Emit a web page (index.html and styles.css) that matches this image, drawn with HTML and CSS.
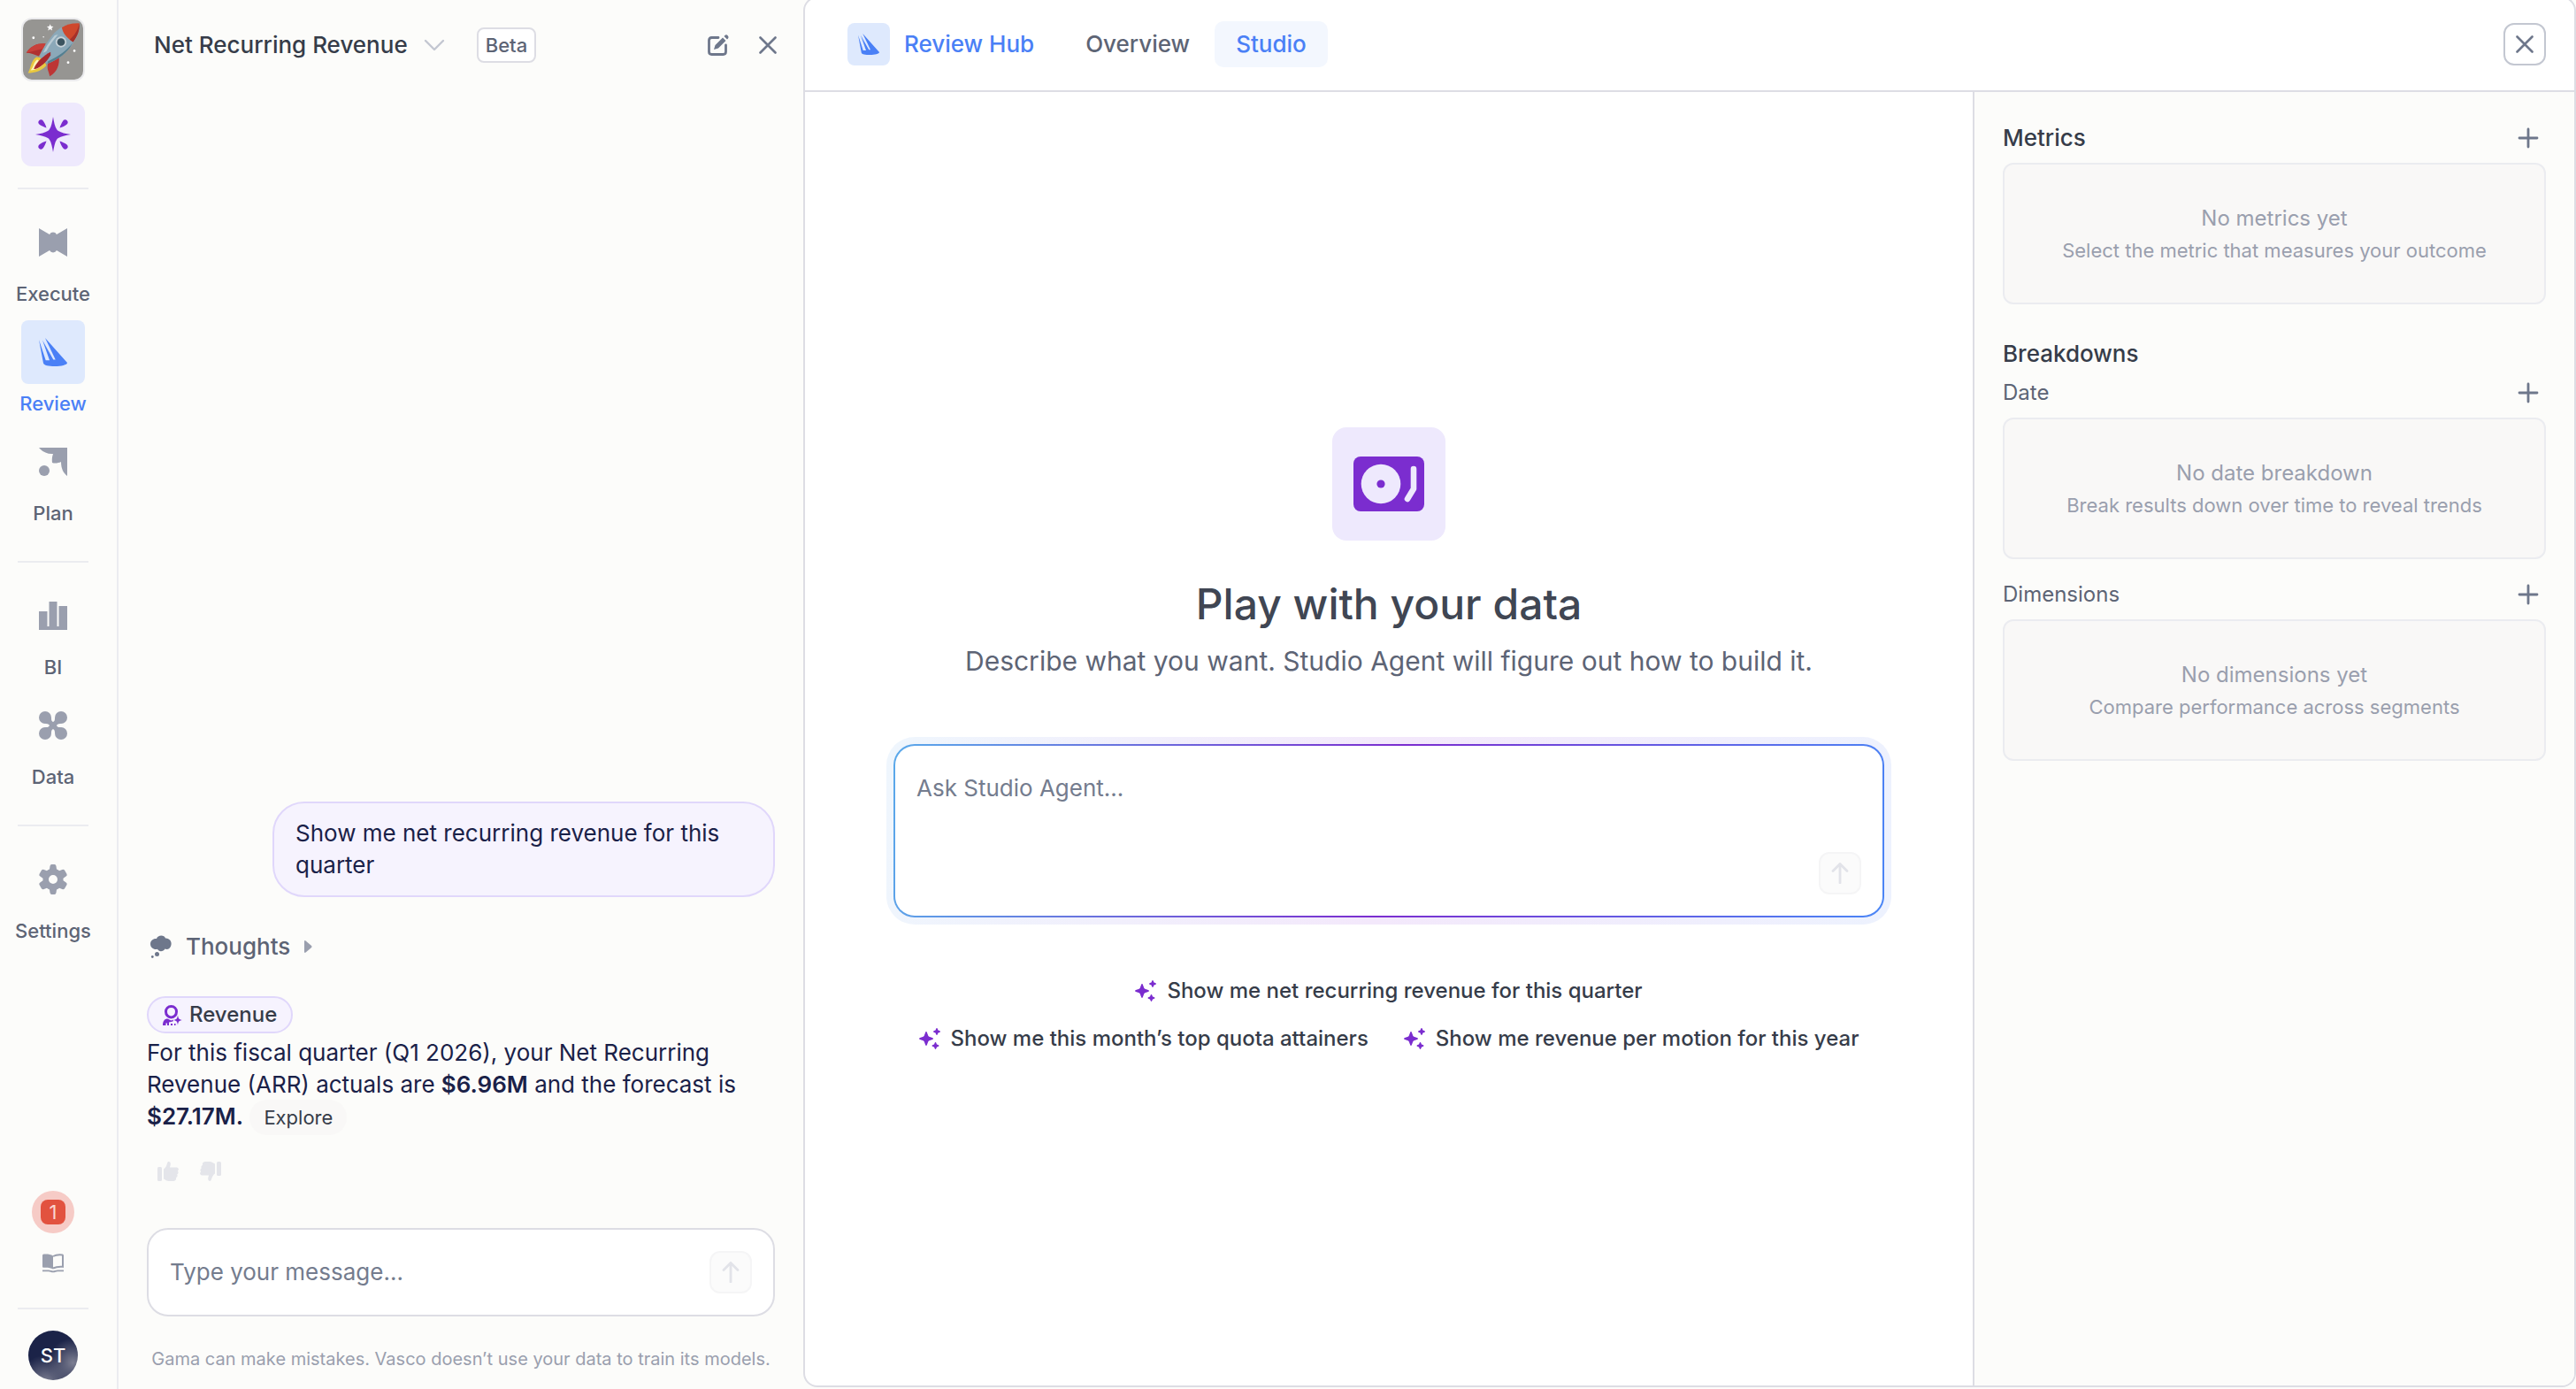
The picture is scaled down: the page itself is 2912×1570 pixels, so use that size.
FILE: index.html
```html
<!DOCTYPE html>
<html lang="en">
<head>
    <meta charset="UTF-8">
    <meta name="viewport" content="width=device-width, initial-scale=1.0">
    <title>Review Hub - Studio</title>
    <link rel="stylesheet" href="styles.css">
</head>
<body>
    <!-- Shared icons -->
    <svg class="sprite" aria-hidden="true">
        <symbol id="icon-review" viewBox="0 0 32 32">
            <path d="M0 2 L7.700 25.200 H12 L4 2.500 L16.300 24.400 H18.700 L7 0 L32 28 C32 30.500 25 32 18 32 C11 32 5.500 31 5 28.500 Z"/>
        </symbol>
        <symbol id="icon-close" viewBox="0 0 20 20">
            <path d="M1.500 1.500 L18.500 18.500 M18.500 1.500 L1.500 18.500" fill="none" stroke="currentColor" stroke-width="2.600" stroke-linecap="round"/>
        </symbol>
        <symbol id="icon-plus" viewBox="0 0 24 24">
            <path d="M12 2 V22 M2 12 H22" fill="none" stroke="currentColor" stroke-width="2.800" stroke-linecap="round"/>
        </symbol>
        <symbol id="icon-up" viewBox="0 0 24 24">
            <path d="M12 23 V1.500 M4 9.500 L12 1.500 L20 9.500" fill="none" stroke="currentColor" stroke-width="2.800" stroke-linecap="round" stroke-linejoin="round"/>
        </symbol>
        <symbol id="icon-sparkles" viewBox="0 0 24 24">
            <path d="M8 4 Q8.600 3.800 8.900 5 L10.300 8.700 Q10.600 9.400 11.300 9.700 L15 11.100 Q17 12 15 12.900 L11.300 14.300 Q10.600 14.600 10.300 15.300 L8.900 19 Q8 21 7.100 19 L5.700 15.300 Q5.400 14.600 4.700 14.300 L1 12.900 Q-1 12 1 11.100 L4.700 9.700 Q5.400 9.400 5.700 8.700 L7.100 5 Q7.400 3.800 8 4 Z"/>
            <path d="M20 0 Q20.700 0 20.900 1 L21.500 2.500 L23 3.100 Q25 4 23 4.900 L21.500 5.500 L20.900 7 Q20 9 19.100 7 L18.500 5.500 L17 4.900 Q15 4 17 3.100 L18.500 2.500 L19.100 1 Q19.300 0 20 0 Z"/>
            <path d="M18.500 16 Q19.200 16 19.400 17 L20 18.500 L21.500 19.100 Q23.500 20 21.500 20.900 L20 21.500 L19.400 23 Q18.500 25 17.600 23 L17 21.500 L15.500 20.900 Q13.500 20 15.500 19.100 L17 18.500 L17.600 17 Q17.800 16 18.500 16 Z"/>
        </symbol>
        <symbol id="icon-thumb" viewBox="0 0 24 24">
            <rect x="0" y="7" width="5" height="16" rx="1.500"/>
            <path d="M7 9.500 C9 8 10.500 5.500 11 3 C11.500 .2 14.800 .6 14.800 3.500 C14.800 5 14.300 6.500 13.800 7.500 H21.500 C24 7.500 24.700 10.500 22.800 11.500 C24 12.800 23.600 14.800 22.200 15.400 C23 16.800 22.400 18.500 21 19 C21.500 21 20.500 23 18 23 H13 C10.500 23 9 21.500 7 20.500 Z"/>
        </symbol>
    </svg>

    <div class="app">
        <!-- Icon rail -->
        <nav class="rail">
            <a class="workspace" href="#" aria-label="Workspace">
                <svg viewBox="0 0 72 72">
                    <g fill="#fff">
                        <path d="M32.500 5.500 L33.600 8.300 L36.500 8.500 L34.300 10.300 L35 13.200 L32.500 11.600 L30 13.200 L30.700 10.300 L28.500 8.500 L31.400 8.300 Z"/>
                        <circle cx="12.500" cy="22" r="1.500"/>
                        <circle cx="24.500" cy="21" r=".8"/>
                        <circle cx="61.500" cy="37.500" r="1.400"/>
                        <circle cx="54" cy="51.500" r="1.500"/>
                    </g>
                    <path d="M16 45 C9 50 10 57 6 64 C14 64 22 62 28 55 L24 46 Z" fill="#e9c83f"/>
                    <path d="M17 48 C12 52 13 57 9 61 C16 60 20 58 24 54 Z" fill="#fdf6b8"/>
                    <path d="M27 29 C19 28 9 31 4 40 C9 40 14 42 19 44 Z" fill="#b03030"/>
                    <path d="M27 29 C19 28 9 31 4 40 L24 35 Z" fill="#c9403a"/>
                    <path d="M43 45 C44 54 41 63 32 68 C31 62 28 60 30 52 Z" fill="#bd3535"/>
                    <path d="M67.500 4.500 C53 4 42 10 35 19 C28 28 23 36 20 44 C22 49 25 52 29 53 C40 49 49 43 56 34 C63 25 68 16 67.500 4.500 Z" fill="#8ba8b8"/>
                    <path d="M60 27 C53 37 43 44 30 50 L29 53 C40 49 49 43 56 34 Z" fill="#547f90"/>
                    <path d="M38 19 C32 26 27 33 24 40 L28 38 C32 30 37 24 42 18 Z" fill="#b9cbd4"/>
                    <path d="M67.500 4.500 C59 4 52 6 46.500 9.500 C47.500 16 52 22 60 27 C65 20 68 13 67.500 4.500 Z" fill="#cf482c"/>
                    <path d="M67.500 4.500 C66 12 62 19 56 24 L60 27 C65 20 68 13 67.500 4.500 Z" fill="#a5302a"/>
                    <path d="M33 39 C25 43 16 51 13 59 C17 61 28 52 33 43 Z" fill="#a92b2d"/>
                    <circle cx="45.500" cy="27" r="6.500" fill="#c7d2d8"/>
                    <circle cx="45.500" cy="27" r="4.600" fill="#3c5460"/>
                </svg>
            </a>
            <button class="agent" aria-label="Agent">
                <svg viewBox="0 0 40 40">
                    <path d="M20 0 C21 6 22 11 24 14 Q24.700 15.300 26 16 C29 18 34 19 40 20 C34 21 29 22 26 24 Q24.700 24.700 24 26 C22 29 21 34 20 40 C19 34 18 29 16 26 Q15.300 24.700 14 24 C11 22 6 21 0 20 C6 19 11 18 14 16 Q15.300 15.300 16 14 C18 11 19 6 20 0 Z"/>
                    <path id="drop" d="M12.500 12.500 C9.500 11.500 7 10.300 5 9 A3 3 0 1 1 9 5 C10.300 7 11.700 9 12.500 12.500 Z"/>
                    <use href="#drop" transform="rotate(90 20 20)"/>
                    <use href="#drop" transform="rotate(180 20 20)"/>
                    <use href="#drop" transform="rotate(270 20 20)"/>
                </svg>
            </button>
            <hr>
            <a class="rail-item" href="#">
                <span class="rail-tile"><svg viewBox="0 0 32 32"><path d="M0 0 L12 7 A4.500 4.500 0 0 1 20 7 L32 0 V32 L20 25 A4.500 4.500 0 0 1 12 25 L0 32 Z"/></svg></span>
                Execute
            </a>
            <a class="rail-item active" href="#">
                <span class="rail-tile"><svg><use href="#icon-review"/></svg></span>
                Review
            </a>
            <a class="rail-item" href="#">
                <span class="rail-tile"><svg viewBox="0 0 32 32"><path d="M0 0 H32 V32 C28 29 25 24 25 16 C22 17.500 18 18 15 17 C14.500 13 15 10 16 7 C9 7.500 3 4 0 0 Z"/><circle cx="6" cy="26" r="6"/></svg></span>
                Plan
            </a>
            <hr>
            <a class="rail-item" href="#">
                <span class="rail-tile"><svg viewBox="0 0 32 32"><path d="M0 11 H9.500 V28 H11.500 V0 H20.500 V28 H22.500 V5 H32 V32 H0 Z"/></svg></span>
                BI
            </a>
            <a class="rail-item" href="#">
                <span class="rail-tile">
                    <svg viewBox="0 0 32 32">
                        <circle cx="7" cy="7" r="7"/><circle cx="25" cy="7" r="7"/><circle cx="7" cy="25" r="7"/><circle cx="25" cy="25" r="7"/>
                        <path d="M14 7 C13.500 13.500 18.500 13.500 18 7 L25 14 C18.500 13.500 18.500 18.500 25 18 L18 25 C18.500 18.500 13.500 18.500 14 25 L7 18 C13.500 18.500 13.500 13.500 7 14 Z"/>
                    </svg>
                </span>
                Data
            </a>
            <hr>
            <a class="rail-item" href="#">
                <span class="rail-tile">
                    <svg viewBox="0 0 32 32">
                        <path fill-rule="evenodd" d="M12.500 1 Q12.800 -1 14.500 -1 H17.500 Q19.200 -1 19.500 1 L20 4.500 Q21.800 5.300 23 6.200 L26.300 5 Q28.200 4.300 29.100 5.800 L31.400 9.700 Q32.300 11.200 31 12.300 L27.500 14.700 V17.300 L31 19.700 Q32.300 20.800 31.400 22.300 L29.100 26.200 Q28.200 27.700 26.300 27 L23 25.800 Q21.800 26.700 20 27.500 L19.500 31 Q19.200 33 17.500 33 H14.500 Q12.800 33 12.500 31 L12 27.500 Q10.200 26.700 9 25.800 L5.700 27 Q3.800 27.700 2.900 26.200 L.6 22.300 Q-.3 20.800 1 19.700 L4.500 17.300 V14.700 L1 12.300 Q-.3 11.200 .6 9.700 L2.900 5.800 Q3.800 4.300 5.700 5 L9 6.200 Q10.200 5.300 12 4.500 Z M16 11 A5 5 0 1 0 16 21 A5 5 0 1 0 16 11 Z"/>
                    </svg>
                </span>
                Settings
            </a>

            <div class="rail-bottom">
                <button class="alerts" aria-label="Notifications"><span>1</span></button>
                <a class="docs" href="#" aria-label="Docs">
                    <svg viewBox="0 0 24 24">
                        <path d="M12 3.500 C9 1.500 5 1.300 1.500 1.600 Q0 1.800 0 3 V15.500 Q0 17 1.500 16.800 C5 16.500 9 16.800 12 18.500 Z"/>
                        <path d="M12 4 C15 2.300 19 2 22.500 2.400 Q23 2.500 23 3.200 V15.800 C19 15.500 15 16 12 17.500" fill="none" stroke="currentColor" stroke-width="2"/>
                        <path d="M0 20.300 H7 C9 20.300 10 21.300 12 21.300 C14 21.300 15 20.300 17 20.300 H24" fill="none" stroke="currentColor" stroke-width="1.800"/>
                    </svg>
                </a>
                <hr>
                <button class="avatar" aria-label="Account">ST</button>
            </div>
        </nav>

        <!-- Agent chat -->
        <section class="chat">
            <header class="chat-header">
                <button class="chat-title">
                    Net Recurring Revenue
                    <svg viewBox="0 0 24 24"><path d="M2 7 L12 17 L22 7" fill="none" stroke="currentColor" stroke-width="2.400" stroke-linecap="round" stroke-linejoin="round"/></svg>
                </button>
                <span class="beta">Beta</span>
                <div class="chat-actions">
                    <button aria-label="New chat">
                        <svg class="edit" viewBox="0 0 24 24">
                            <path d="M12 3.500 H4.500 Q1.500 3.500 1.500 6.500 V19.500 Q1.500 22.500 4.500 22.500 H17.500 Q20.500 22.500 20.500 19.500 V12" fill="none" stroke="currentColor" stroke-width="2.800" stroke-linecap="round"/>
                            <path d="M17 3.500 L20.500 7 L12 15.500 L7 17 L8.500 12 Z M18.500 2 L19.500 1 Q21 -.5 22.700 1.200 Q24.400 3 23 4.500 L22 5.500 Z"/>
                        </svg>
                    </button>
                    <button aria-label="Close chat"><svg><use href="#icon-close"/></svg></button>
                </div>
            </header>

            <div class="messages">
                <p class="bubble">Show me net recurring revenue for this quarter</p>
                <button class="thoughts">
                    <svg class="cloud" viewBox="0 0 24 26">
                        <path d="M7 4 C8 -.5 16 -.8 17 3.500 C21 3 24.500 7 23.500 11 C23 15 19 17 16.500 15.500 C14.500 19 9.500 19 8 15.800 C4 17 0 14 0 10 C0 6 3.500 3.500 7 4 Z"/>
                        <circle cx="7.500" cy="21.500" r="2.500"/><circle cx="2.300" cy="24.500" r="1.400"/>
                    </svg>
                    Thoughts
                    <svg class="caret" viewBox="0 0 10 16"><path d="M0 1.500 Q0 -.5 1.800 .8 L9 7 Q10 8 9 9 L1.800 15.200 Q0 16.500 0 14.500 Z"/></svg>
                </button>
                <div class="answer">
                    <span class="topic">
                        <svg viewBox="0 0 22 24">
                            <path d="M9.500 2.500 C13 2.500 15.500 5 15.500 8.500 C15.500 12 13 15 9.500 15 C6 15 3.500 12 3.500 8.500 C3.500 5 6 2.500 9.500 2.500 Z" fill="none" stroke="currentColor" stroke-width="3"/>
                            <path d="M0 24 C0 19 2 16.500 5.500 16.500 L9.500 18.500 L12 17.500 L11.500 19.500 L7 20.500 V24 H5 V21.500 H3.500 V24 Z M9 22 H11 V24 H9 Z M13 22 H14.500 V24 H13 Z"/>
                            <path d="M17 12.500 C17.700 16.500 18.200 17.200 22 18 C18.200 18.800 17.700 19.500 17 23.500 C16.300 19.500 15.800 18.800 12 18 C15.800 17.200 16.300 16.500 17 12.500 Z"/>
                        </svg>
                        Revenue
                    </span>
                    <p>For this fiscal quarter (Q1 2026), your Net Recurring Revenue (ARR) actuals are <strong>$6.96M</strong> and the forecast is <strong>$27.17M.</strong> <button class="explore">Explore</button></p>
                </div>
                <div class="feedback">
                    <button aria-label="Good answer"><svg><use href="#icon-thumb"/></svg></button>
                    <button aria-label="Bad answer"><svg class="down"><use href="#icon-thumb"/></svg></button>
                </div>
            </div>

            <form class="composer">
                <input type="text" placeholder="Type your message..." aria-label="Type your message">
                <button class="send" type="button" aria-label="Send"><svg><use href="#icon-up"/></svg></button>
            </form>
            <p class="disclaimer">Gama can make mistakes. Vasco doesn’t use your data to train its models.</p>
        </section>

        <!-- Review hub -->
        <main class="hub">
            <header class="hub-header">
                <a class="hub-name" href="#">
                    <span><svg><use href="#icon-review"/></svg></span>
                    Review Hub
                </a>
                <nav class="tabs">
                    <a href="#">Overview</a>
                    <a class="active" href="#">Studio</a>
                </nav>
                <button class="hub-close" aria-label="Close"><svg><use href="#icon-close"/></svg></button>
            </header>

            <div class="hub-body">
                <section class="studio">
                    <div class="studio-icon">
                        <svg viewBox="0 0 80 64">
                            <rect width="80" height="62" y="1" rx="8" fill="#7b2dcf"/>
                            <circle cx="31" cy="32" r="22.300" fill="#eee9fd"/>
                            <circle cx="31" cy="32" r="4.600" fill="#7b2dcf"/>
                            <path d="M68 15 V37.500 L61 49" fill="none" stroke="#eee9fd" stroke-width="6.600" stroke-linecap="round" stroke-linejoin="round"/>
                        </svg>
                    </div>
                    <h1>Play with your data</h1>
                    <p class="lead">Describe what you want. Studio Agent will figure out how to build it.</p>
                    <div class="prompt-glow">
                        <form class="prompt">
                            <textarea placeholder="Ask Studio Agent..." aria-label="Ask Studio Agent"></textarea>
                            <button class="send" type="button" aria-label="Send"><svg><use href="#icon-up"/></svg></button>
                        </form>
                    </div>
                    <div class="suggestions">
                        <button><svg><use href="#icon-sparkles"/></svg>Show me net recurring revenue for this quarter</button>
                        <button><svg><use href="#icon-sparkles"/></svg>Show me this month’s top quota attainers</button>
                        <button><svg><use href="#icon-sparkles"/></svg>Show me revenue per motion for this year</button>
                    </div>
                </section>

                <aside class="config">
                    <div class="config-row">
                        <h2>Metrics</h2>
                        <button aria-label="Add metric"><svg><use href="#icon-plus"/></svg></button>
                    </div>
                    <div class="empty">
                        <p>No metrics yet</p>
                        <small>Select the metric that measures your outcome</small>
                    </div>

                    <h2 class="breakdowns">Breakdowns</h2>
                    <div class="config-row">
                        <h3>Date</h3>
                        <button aria-label="Add date breakdown"><svg><use href="#icon-plus"/></svg></button>
                    </div>
                    <div class="empty">
                        <p>No date breakdown</p>
                        <small>Break results down over time to reveal trends</small>
                    </div>

                    <div class="config-row dimensions">
                        <h3>Dimensions</h3>
                        <button aria-label="Add dimension"><svg><use href="#icon-plus"/></svg></button>
                    </div>
                    <div class="empty">
                        <p>No dimensions yet</p>
                        <small>Compare performance across segments</small>
                    </div>
                </aside>
            </div>
        </main>
    </div>
</body>
</html>
```

FILE: styles.css
```css
:root {
    --page: #fcfcfa;
    --card: #f9f8f7;
    --line: #dddde4;
    --line-light: #ebecf0;
    --ink: #1a2148;
    --heading: #363c49;
    --text: #5d6475;
    --icon: #6e778b;
    --muted: #9a9fae;
    --blue: #4a80f6;
    --blue-bg: #dee9fd;
    --purple: #7b2dcf;
    --purple-bg: #eee9fd;
}

* {
    margin: 0;
    padding: 0;
    box-sizing: border-box;
}

body {
    background: var(--page);
    color: var(--ink);
    font-family: Inter, "Liberation Sans", sans-serif;
    font-size: 26px;
    line-height: 36px;
    overflow: hidden;
}

button {
    border: none;
    background: none;
    font: inherit;
    color: inherit;
    cursor: pointer;
}

a {
    color: inherit;
    text-decoration: none;
}

svg {
    display: block;
    flex-shrink: 0;
    fill: currentColor;
    overflow: visible;
}

input,
textarea {
    flex: 1;
    min-width: 0;
    border: none;
    outline: none;
    background: none;
    font: inherit;
    color: var(--ink);
    resize: none;
}

::placeholder {
    color: #747c8e;
    opacity: 1;
}

.sprite {
    position: absolute;
    width: 0;
    height: 0;
}

.app {
    display: flex;
    height: 100vh;
}

/* Icon rail */
.rail {
    width: 134px;
    flex-shrink: 0;
    display: flex;
    flex-direction: column;
    align-items: center;
    padding: 20px 12px 10px 0;
    border-right: 2px solid var(--line-light);
}

.rail hr {
    width: 80px;
    height: 2px;
    flex-shrink: 0;
    margin: 24px 0;
    border: none;
    background: var(--line-light);
}

.workspace {
    width: 72px;
    height: 72px;
    border: 2px solid #ebebed;
    border-radius: 12px;
    background: #969592;
    overflow: hidden;
}

.workspace svg {
    width: 68px;
    height: 68px;
}

.agent {
    display: flex;
    align-items: center;
    justify-content: center;
    width: 72px;
    height: 72px;
    margin-top: 24px;
    border-radius: 12px;
    background: var(--purple-bg);
    color: var(--purple);
}

.agent svg {
    width: 40px;
    height: 40px;
}

.rail-item {
    display: flex;
    flex-direction: column;
    align-items: center;
    gap: 8px;
    margin-bottom: 16px;
    font-size: 22px;
    font-weight: 500;
    line-height: 28px;
    color: var(--text);
}

.rail-tile {
    display: flex;
    align-items: center;
    justify-content: center;
    width: 72px;
    height: 72px;
    border-radius: 8px;
    color: var(--muted);
}

.rail-tile svg {
    width: 32px;
    height: 32px;
}

.rail-item.active,
.rail-item.active .rail-tile {
    color: var(--blue);
}

.rail-item.active .rail-tile {
    background: var(--blue-bg);
}

.rail-bottom {
    display: flex;
    flex-direction: column;
    align-items: center;
    margin-top: auto;
}

.alerts {
    display: flex;
    padding: 10px;
    border-radius: 50%;
    background: #f6cbc6;
}

.alerts span {
    width: 28px;
    border-radius: 8px;
    background: #e2523f;
    color: #fbd5d0;
    font-size: 22px;
    line-height: 28px;
}

.docs {
    margin: 22px 0 14px;
    color: var(--muted);
}

.docs svg {
    width: 24px;
    height: 24px;
}

.avatar {
    width: 56px;
    height: 56px;
    border-radius: 50%;
    background:
        radial-gradient(circle at 90% 65%, #7d7f92 0, transparent 45%),
        radial-gradient(circle at 35% 105%, #7d7f92 0, transparent 45%),
        #1b2348;
    color: #fff;
    font-size: 22px;
    font-weight: 500;
}

/* Chat */
.chat {
    display: flex;
    flex-direction: column;
    width: 774px;
    flex-shrink: 0;
    padding: 0 32px 20px;
}

.chat-header {
    display: flex;
    align-items: center;
    height: 102px;
    padding-left: 8px;
}

.chat-title {
    display: flex;
    align-items: center;
    gap: 18px;
    color: var(--heading);
    font-weight: 500;
}

.chat-title svg {
    width: 24px;
    height: 24px;
    color: #c3c7d1;
}

.beta {
    margin-left: 36px;
    padding: 4px 8px;
    border: 2px solid var(--line);
    border-radius: 8px;
    background: #fff;
    color: var(--text);
    font-size: 22px;
    font-weight: 500;
    line-height: 28px;
}

.chat-actions {
    display: flex;
    gap: 12px;
    margin-left: auto;
    margin-right: -14px;
    color: var(--icon);
}

.chat-actions button {
    display: flex;
    align-items: center;
    justify-content: center;
    width: 44px;
    height: 44px;
}

.chat-actions svg {
    width: 20px;
    height: 20px;
}

.chat-actions .edit {
    width: 24px;
    height: 24px;
}

.messages {
    flex: 1;
    display: flex;
    flex-direction: column;
    align-items: flex-start;
    justify-content: flex-end;
    gap: 36px;
}

.bubble {
    align-self: flex-end;
    width: 80%;
    padding: 16px 24px;
    border: 2px solid #e0d7fb;
    border-radius: 36px;
    background: #f6f3fe;
}

.thoughts {
    display: flex;
    align-items: center;
    gap: 16px;
    padding-left: 4px;
    color: var(--text);
    font-weight: 500;
    line-height: 40px;
}

.cloud {
    width: 24px;
    height: 26px;
    color: var(--icon);
}

.caret {
    width: 9px;
    height: 16px;
    color: var(--muted);
}

.topic {
    display: flex;
    align-items: center;
    gap: 8px;
    width: fit-content;
    margin-bottom: 4px;
    padding: 3px 16px;
    border: 2px solid #e0d7fb;
    border-radius: 21px;
    background: #f6f3fe;
    color: var(--heading);
    font-size: 24px;
    font-weight: 500;
    line-height: 32px;
}

.topic svg {
    width: 22px;
    height: 24px;
    color: var(--purple);
}

.answer strong {
    font-weight: 600;
}

.explore {
    margin: -8px 0;
    padding: 0 16px;
    border-radius: 20px;
    background: var(--card);
    color: var(--heading);
    font-size: 22px;
    line-height: 40px;
}

.feedback {
    display: flex;
    margin: -16px 0 40px;
    color: #e4e5ea;
}

.feedback button {
    padding: 12px;
}

.feedback svg {
    width: 24px;
    height: 24px;
}

.feedback .down {
    transform: rotate(180deg);
}

.composer {
    display: flex;
    align-items: center;
    height: 100px;
    flex-shrink: 0;
    padding: 0 24px;
    border: 2px solid var(--line);
    border-radius: 24px;
    background: #fff;
}

.send {
    display: flex;
    align-items: center;
    justify-content: center;
    width: 48px;
    height: 48px;
    border: 2px solid #f5f5f6;
    border-radius: 12px;
    background: #fbfbfb;
    color: #e2e3e9;
}

.send svg {
    width: 24px;
    height: 24px;
}

.disclaimer {
    margin-top: 34px;
    color: var(--muted);
    font-size: 20px;
    line-height: 28px;
    text-align: center;
}

/* Hub */
.hub {
    flex: 1;
    display: flex;
    flex-direction: column;
    margin: -4px 0 2px;
    border: 2px solid var(--line);
    border-radius: 16px;
    background: #fff;
    overflow: hidden;
}

.hub-header {
    display: flex;
    align-items: center;
    height: 106px;
    flex-shrink: 0;
    padding: 0 32px 0 48px;
    border-bottom: 2px solid var(--line);
    font-weight: 500;
}

.hub-name {
    display: flex;
    align-items: center;
    gap: 16px;
    color: var(--blue);
}

.hub-name span {
    display: flex;
    align-items: center;
    justify-content: center;
    width: 48px;
    height: 48px;
    border-radius: 8px;
    background: var(--blue-bg);
}

.hub-name svg {
    width: 24px;
    height: 24px;
}

.tabs {
    display: flex;
    gap: 4px;
    margin-left: 34px;
    color: var(--text);
}

.tabs a {
    padding: 8px 24px;
    border-radius: 10px;
}

.tabs .active {
    background: #f3f7fe;
    color: var(--blue);
}

.hub-close {
    display: flex;
    align-items: center;
    justify-content: center;
    width: 48px;
    height: 48px;
    margin-left: auto;
    border: 2px solid #c3c7d1;
    border-radius: 12px;
    color: var(--icon);
}

.hub-close svg {
    width: 20px;
    height: 20px;
}

.hub-body {
    flex: 1;
    display: flex;
}

/* Studio */
.studio {
    flex: 1;
    display: flex;
    flex-direction: column;
    align-items: center;
    justify-content: center;
    padding-top: 10px;
}

.studio-icon {
    display: flex;
    align-items: center;
    justify-content: center;
    width: 128px;
    height: 128px;
    border-radius: 16px;
    background: var(--purple-bg);
}

.studio-icon svg {
    width: 80px;
    height: 64px;
}

.studio h1 {
    margin: 42px 0 14px;
    color: #404653;
    font-size: 48px;
    font-weight: 500;
    line-height: 60px;
}

.lead {
    color: var(--text);
    font-size: 30px;
    line-height: 40px;
}

.prompt-glow {
    width: 100%;
    max-width: 1136px;
    margin: 66px 0 52px;
    padding: 8px;
    border-radius: 32px;
    background: linear-gradient(100deg, #eff6fd, #f3e8fb, #edf2fe);
}

.prompt {
    display: flex;
    align-items: flex-end;
    height: 196px;
    padding: 24px;
    border: 2px solid transparent;
    border-radius: 24px;
    background:
        linear-gradient(#fff, #fff) padding-box,
        linear-gradient(100deg, #5aa9ea, #7b2dcf, #4a86f6) border-box;
}

.prompt textarea {
    height: 100%;
    padding-top: 6px;
}

.suggestions {
    display: flex;
    flex-wrap: wrap;
    justify-content: center;
    gap: 8px;
    max-width: 1120px;
}

.suggestions button {
    display: flex;
    align-items: center;
    gap: 12px;
    padding: 8px 16px;
    color: var(--heading);
    font-size: 24px;
    font-weight: 500;
    line-height: 30px;
}

.suggestions svg {
    width: 24px;
    height: 24px;
    color: var(--purple);
}

/* Config panel */
.config {
    width: 680px;
    flex-shrink: 0;
    padding: 32px;
    border-left: 2px solid var(--line);
    background: var(--page);
}

.config-row {
    display: flex;
    align-items: center;
    justify-content: space-between;
    height: 40px;
    margin-bottom: 8px;
}

.config h2 {
    color: var(--heading);
    font-size: 26px;
    font-weight: 500;
    line-height: 40px;
}

.config h3 {
    color: var(--text);
    font-size: 24px;
    font-weight: 400;
}

.config-row button {
    padding: 8px;
    color: var(--icon);
}

.config-row svg {
    width: 24px;
    height: 24px;
}

.config .breakdowns {
    margin: 36px 0 4px;
}

.dimensions {
    margin-top: 20px;
}

.empty {
    display: flex;
    flex-direction: column;
    align-items: center;
    justify-content: center;
    gap: 2px;
    height: 160px;
    border: 2px solid var(--line-light);
    border-radius: 12px;
    background: var(--card);
    color: var(--muted);
    font-size: 24px;
}

.empty small {
    font-size: 22px;
    line-height: 32px;
}
```
